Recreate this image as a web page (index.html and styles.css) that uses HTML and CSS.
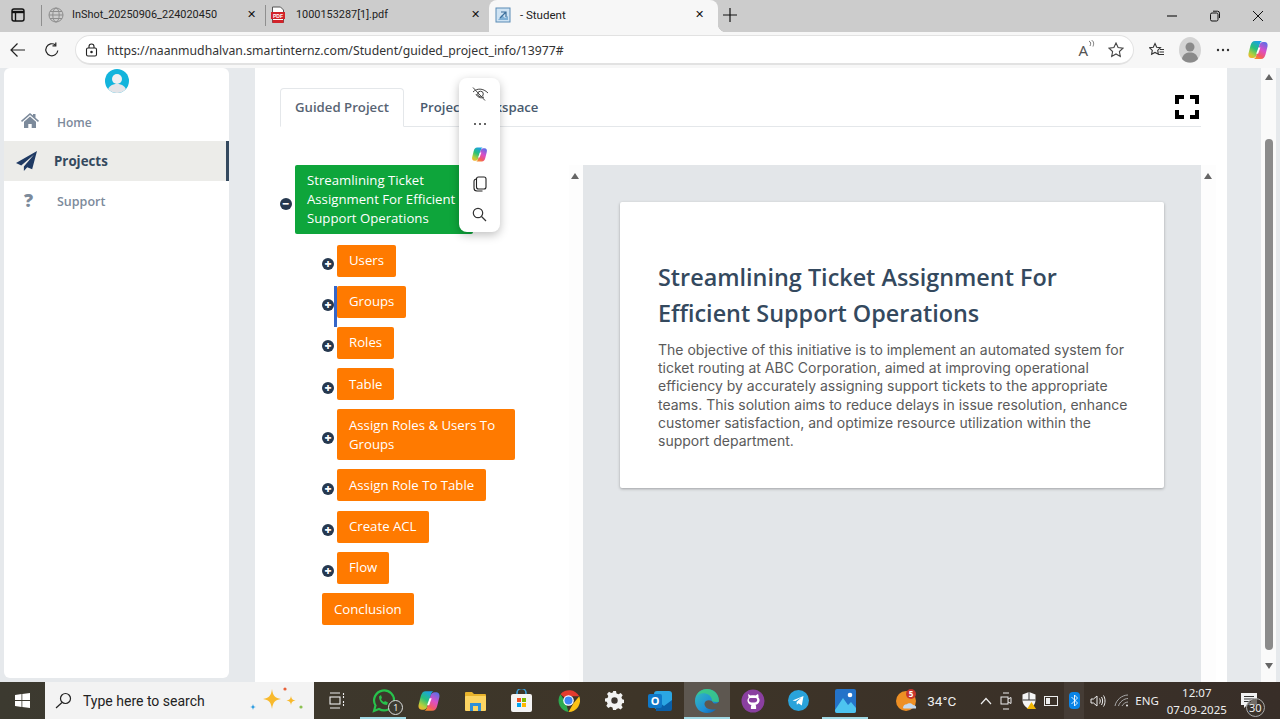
FILE: index.html
```html
<!DOCTYPE html>
<html lang="en">
<head>
  <meta charset="UTF-8">
  <title>Student</title>
  <link rel="stylesheet" href="styles.css">
</head>
<body>
  <div class="tabstrip">
    <div class="tab-menu">
      <svg width="16" height="16" viewBox="0 0 16 16" fill="none" stroke="#111" stroke-width="1.4"><rect x="2" y="2" width="12" height="12" rx="2"/><path d="M2 5h12" stroke-width="2.4"/><path d="M5.5 5v9"/></svg>
    </div>
    <div class="tab tab-first">
      <svg width="16" height="16" viewBox="0 0 16 16" fill="none" stroke="#8d8d8d"><circle cx="8" cy="8" r="7"/><ellipse cx="8" cy="8" rx="3.2" ry="7"/><path d="M1 8h14M2 4.5h12M2 11.500h12"/></svg>
      <span class="tab-title">InShot_20250906_224020450</span>
      <span class="tab-x">✕</span>
    </div>
    <div class="tab tab-second">
      <svg width="16" height="18" viewBox="0 0 16 18"><path d="M2.500 1h8l3 3v12.500h-11z" fill="#fff" stroke="#555"/><rect x="1" y="6" width="14" height="7" fill="#d2232a"/><text x="8" y="11.500" text-anchor="middle" class="pdf-label">PDF</text><path d="M2.500 14h11v3h-11z" fill="#d2232a"/></svg>
      <span class="tab-title">1000153287[1].pdf</span>
      <span class="tab-x">✕</span>
    </div>
    <div class="tab tab-active">
      <svg width="16" height="16" viewBox="0 0 16 16"><rect x="1" y="1" width="14" height="14" fill="#cfe3f3" stroke="#5b8bb5"/><path d="M3 13l4-5 3 3 3-2v4z" fill="#7fb0d6"/><path d="M6 5h5v5M11 5l-6 6" fill="none" stroke="#3c6f9c" stroke-width="1.2"/></svg>
      <span class="tab-title">- Student</span>
      <span class="tab-x">✕</span>
    </div>
    <div class="tab-new">
      <svg width="14" height="14" viewBox="0 0 14 14" stroke="#111" stroke-width="1.2"><path d="M7 0v14M0 7h14"/></svg>
    </div>
    <div class="win-controls">
      <svg width="12" height="12" viewBox="0 0 12 12" stroke="#111" stroke-width="1.1"><path d="M1 6h10"/></svg>
      <svg width="12" height="12" viewBox="0 0 12 12" fill="none" stroke="#111"><rect x="1.500" y="3" width="7.500" height="8" rx="1.500"/><path d="M4 1.200h4.500a2 2 0 0 1 2 2V8"/></svg>
      <svg width="12" height="12" viewBox="0 0 12 12" stroke="#111"><path d="M1 1l10 10M11 1L1 11"/></svg>
    </div>
  </div>

  <div class="toolbar">
    <svg class="nav-btn" width="16" height="16" viewBox="0 0 16 16" fill="none" stroke="#222" stroke-width="1.2"><path d="M15 8H1M7.500 1.500L1 8l6.500 6.500"/></svg>
    <svg class="nav-btn" width="16" height="16" viewBox="0 0 16 16" fill="none" stroke="#222" stroke-width="1.2"><path d="M13.800 8.500A6 6 0 1 1 11.500 3"/><path d="M11.800 .5v3.300H8.500"/></svg>
    <div class="addressbar">
      <svg width="13" height="14" viewBox="0 0 13 14" fill="none" stroke="#222" stroke-width="1.1"><rect x="1.500" y="5" width="10" height="8" rx="1.500"/><path d="M4 5V3.500a2.500 2.500 0 0 1 5 0V5"/><circle cx="6.500" cy="9" r=".7" fill="#222"/></svg>
      <span class="url">https://naanmudhalvan.smartinternz.com/Student/guided_project_info/13977#</span>
      <span class="read-aloud">A<svg width="7" height="9" viewBox="0 0 7 9" fill="none" stroke="#555" stroke-width=".8"><path d="M1 1c2 1 2 3 1 5M3.500 0c2.500 1.500 2.500 4 1.500 6.500"/></svg></span>
      <svg width="16" height="16" viewBox="0 0 16 16" fill="none" stroke="#444" stroke-width="1.1"><path d="M8 1l2.100 4.500 4.900.6-3.600 3.400.9 4.900L8 12l-4.300 2.400.9-4.900L1 6.100l4.900-.6z"/></svg>
    </div>
    <div class="toolbar-right">
      <svg width="16" height="16" viewBox="0 0 16 16" fill="none" stroke="#333" stroke-width="1.1"><path d="M6 1.500l1.700 3.700 3.800.5-2.800 2.700.7 3.900L6 10.400l-3.400 1.900.7-3.900L.5 5.700l3.800-.5z"/><path d="M11 7.500h4M10.500 10h4.500M9.500 12.500H15"/></svg>
      <svg class="profile" width="22" height="26" viewBox="0 0 22 26"><ellipse cx="11" cy="13" rx="11" ry="13" fill="#d4d4d4"/><circle cx="11" cy="10" r="4.500" fill="#8a8a8a"/><path d="M3 22c1-5 4-6.500 8-6.500s7 1.500 8 6.500c-2 2.500-5 3.500-8 3.500S5 24.500 3 22z" fill="#8a8a8a"/></svg>
      <svg class="more-dots" width="14" height="4" viewBox="0 0 14 4" fill="#333"><circle cx="2" cy="2" r="1.200"/><circle cx="7" cy="2" r="1.200"/><circle cx="12" cy="2" r="1.200"/></svg>
      <svg width="22" height="22" viewBox="0 0 22 22"><defs><linearGradient id="cp1" x1="0.700" y1="0" x2="0.200" y2="1"><stop offset="0" stop-color="#1a9fe8"/><stop offset=".45" stop-color="#27c07a"/><stop offset=".8" stop-color="#b5cf3c"/><stop offset="1" stop-color="#f5b32e"/></linearGradient><linearGradient id="cp2" x1="0.800" y1="0" x2="0.300" y2="1"><stop offset="0" stop-color="#5a6fe8"/><stop offset=".45" stop-color="#d94fc8"/><stop offset=".8" stop-color="#f2586a"/><stop offset="1" stop-color="#f58a2e"/></linearGradient></defs><path d="M8 2h7c-1 .5-1.700 1.500-2 2.500L9.500 16c-.5 1.800-1.800 3-3.500 3H4.500C2 19 1 17 1.500 14.500l2-8C4.200 3.800 5.500 2 8 2z" fill="url(#cp1)"/><path d="M14 20H7c1-.5 1.700-1.500 2-2.500L12.500 6c.5-1.800 1.800-3 3.500-3h1.500c2.500 0 3.500 2 3 4.500l-2 8c-.7 2.700-2 4.500-4.500 4.500z" fill="url(#cp2)"/><path d="M11.500 8.500l-2.300 6.300h1.900l2.300-6.300z" fill="#fff"/></svg>
    </div>
  </div>

  <div class="page">
    <aside class="sidebar">
      <div class="avatar">
        <svg width="24" height="24" viewBox="0 0 24 24"><defs><clipPath id="av"><circle cx="12" cy="12" r="12"/></clipPath></defs><g clip-path="url(#av)"><rect width="24" height="24" fill="#13b4dc"/><circle cx="12" cy="10" r="5" fill="#f0f0f2"/><path d="M2 24c1-7 5-9 10-9s9 2 10 9z" fill="#e4e4e8"/></g></svg>
      </div>
      <a class="nav-item nav-home">
        <svg class="nav-icon" width="18" height="15" viewBox="0 0 18 15" fill="#7c8a9b"><path d="M9 0l3 2.600V1h2.500v3.800L18 7.800l-1 1.100L9 2 1 8.900 0 7.800z"/><path d="M9 3.500l6 5.200V15h-4.300v-4H7.300v4H3V8.700z"/></svg>
        <span>Home</span>
      </a>
      <a class="nav-item nav-active">
        <svg class="nav-icon" width="21" height="20" viewBox="0 0 20 19" fill="#1f3a63"><path d="M20 0L0 11.500l5 2.200L17 3.500 7.500 14.700V19l3.200-3.600 4.700 2z"/></svg>
        <span>Projects</span>
      </a>
      <a class="nav-item nav-support">
        <span class="nav-icon help-mark">?</span>
        <span>Support</span>
      </a>
    </aside>

    <main class="content">
      <div class="tabs">
        <div class="tab-link tab-link-active">Guided Project</div>
        <div class="tab-link">Project Workspace</div>
        <svg class="fullscreen" width="24" height="24" viewBox="0 0 24 24" fill="none" stroke="#000" stroke-width="4"><path d="M2 9V2h7M15 2h7v7M22 15v7h-7M9 22H2v-7"/></svg>
      </div>

      <div class="workspace">
        <div class="tree">
          <div class="tree-root">
            <span class="toggle">−</span>
            <div class="node node-green">Streamlining Ticket Assignment For Efficient Support Operations</div>
          </div>
          <div class="tree-children">
            <div class="tree-row"><span class="toggle">+</span><div class="node">Users</div></div>
            <div class="tree-row tree-row-marked"><span class="toggle">+</span><div class="node">Groups</div></div>
            <div class="tree-row"><span class="toggle">+</span><div class="node">Roles</div></div>
            <div class="tree-row"><span class="toggle">+</span><div class="node">Table</div></div>
            <div class="tree-row"><span class="toggle">+</span><div class="node node-wide">Assign Roles &amp; Users To Groups</div></div>
            <div class="tree-row"><span class="toggle">+</span><div class="node">Assign Role To Table</div></div>
            <div class="tree-row"><span class="toggle">+</span><div class="node">Create ACL</div></div>
            <div class="tree-row"><span class="toggle">+</span><div class="node">Flow</div></div>
            <div class="tree-row"><div class="node">Conclusion</div></div>
          </div>
        </div>
        <div class="tree-scroll"><span class="arrow-up"></span></div>
        <div class="detail">
          <div class="card">
            <h1>Streamlining Ticket Assignment For Efficient Support Operations</h1>
            <p>The objective of this initiative is to implement an automated system for ticket routing at ABC Corporation, aimed at improving operational efficiency by accurately assigning support tickets to the appropriate teams. This solution aims to reduce delays in issue resolution, enhance customer satisfaction, and optimize resource utilization within the support department.</p>
          </div>
        </div>
        <div class="detail-scroll"><span class="arrow-up"></span></div>
      </div>
    </main>

    <div class="page-gutter"></div>
    <div class="page-scroll">
      <span class="arrow-up"></span>
      <div class="page-thumb"></div>
      <span class="arrow-down"></span>
    </div>
  </div>

  <div class="selection-menu">
    <svg width="18" height="16" viewBox="0 0 18 16" fill="none" stroke="#444" stroke-width="1"><path d="M2 6c4-4 10-4 15 1"/><path d="M5 8c1 3 5 5 8 3"/><circle cx="9.500" cy="8" r="2.800"/><path d="M2 1.500l12 13"/></svg>
    <svg width="14" height="4" viewBox="0 0 14 4" fill="#333"><circle cx="2" cy="2" r="1"/><circle cx="7" cy="2" r="1"/><circle cx="12" cy="2" r="1"/></svg>
    <svg width="17" height="17" viewBox="0 0 22 22"><path d="M8 2h7c-1 .5-1.700 1.500-2 2.500L9.500 16c-.5 1.800-1.800 3-3.500 3H4.500C2 19 1 17 1.500 14.500l2-8C4.200 3.800 5.500 2 8 2z" fill="url(#cp1)"/><path d="M14 20H7c1-.5 1.700-1.500 2-2.500L12.500 6c.5-1.800 1.800-3 3.500-3h1.500c2.500 0 3.500 2 3 4.500l-2 8c-.7 2.700-2 4.500-4.500 4.500z" fill="url(#cp2)"/><path d="M11.500 8.500l-2.300 6.300h1.900l2.300-6.300z" fill="#fff"/></svg>
    <svg width="14" height="16" viewBox="0 0 14 16" fill="none" stroke="#222" stroke-width="1.1"><rect x="3.500" y="1" width="9.500" height="12" rx="2"/><path d="M3.500 3A2.500 2.500 0 0 0 1 5.500V12a3 3 0 0 0 3 3h5.500"/></svg>
    <svg width="15" height="15" viewBox="0 0 15 15" fill="none" stroke="#333" stroke-width="1.2"><circle cx="6" cy="6" r="4.700"/><path d="M9.500 9.500L14 14"/></svg>
  </div>

  <footer class="taskbar">
    <div class="start">
      <svg width="15" height="15" viewBox="0 0 15 15" fill="#fff"><path d="M0 2.100l6.500-1V7H0zM7.300 1L15 0v7H7.300zM0 8h6.500v5.900l-6.500-1zM7.300 8H15v7l-7.700-1.100z"/></svg>
    </div>
    <div class="search">
      <svg width="17" height="17" viewBox="0 0 17 17" fill="none" stroke="#222" stroke-width="1.2"><circle cx="10.500" cy="6.500" r="5"/><path d="M7 10.500L1 16"/></svg>
      <span class="search-text">Type here to search</span>
      <svg class="search-art" width="58" height="30" viewBox="0 0 58 30"><path d="M24 3c1 7 3 9 9 10-6 1-8 3-9 10-1-7-3-9-9-10 6-1 8-3 9-10z" fill="#f8b92c"/><path d="M43 10c.5 3 1.500 4 4.500 4.500-3 .5-4 1.500-4.500 4.500-.5-3-1.500-4-4.500-4.500 3-.5 4-1.500 4.500-4.500z" fill="#f8b92c"/><path d="M5 18c.3 2 1 2.700 3 3-2 .3-2.700 1-3 3-.3-2-1-2.700-3-3 2-.3 2.700-1 3-3z" fill="#2a9be0"/><circle cx="37" cy="3" r="1.600" fill="#e9623a"/><circle cx="53" cy="21" r="1.600" fill="#8cc152"/></svg>
    </div>
    <div class="task-icons">
      <div class="task-icon">
        <svg width="16" height="17" viewBox="0 0 16 17" fill="none" stroke="#eee" stroke-width="1.1"><path d="M1 1h10M1 16h10"/><rect x="1" y="5" width="10" height="7"/><path d="M14.500 1v5M14.500 9v6" stroke-dasharray="2 1"/></svg>
      </div>
      <div class="task-icon task-running">
        <svg width="24" height="24" viewBox="0 0 24 24" fill="none" stroke="#27c24c" stroke-width="2.200"><path d="M3 22l1.500-5.500A10 10 0 1 1 8 20z"/><path d="M8 7.500c0 5 4 8.500 8 8.500l1-2.500-3-1.500-1 1c-1.500-.5-2.500-1.700-3-3l1-1-1-3z" fill="#27c24c" stroke="none"/></svg>
        <span class="task-badge">1</span>
      </div>
      <div class="task-icon">
        <svg width="24" height="24" viewBox="0 0 22 22"><path d="M8 2h7c-1 .5-1.700 1.500-2 2.500L9.500 16c-.5 1.800-1.800 3-3.500 3H4.500C2 19 1 17 1.500 14.500l2-8C4.200 3.800 5.500 2 8 2z" fill="url(#cp1)"/><path d="M14 20H7c1-.5 1.700-1.500 2-2.500L12.500 6c.5-1.800 1.800-3 3.500-3h1.500c2.500 0 3.500 2 3 4.500l-2 8c-.7 2.700-2 4.500-4.500 4.500z" fill="url(#cp2)"/><path d="M11.500 8.500l-2.300 6.300h1.900l2.300-6.300z" fill="#fff"/></svg>
      </div>
      <div class="task-icon">
        <svg width="21" height="20" viewBox="0 0 21 20"><path d="M0 2a1 1 0 0 1 1-1h6l2 2h11a1 1 0 0 1 1 1v3H0z" fill="#e8b32c"/><rect y="5" width="21" height="15" rx="1" fill="#fcd462"/><rect x="5" y="12" width="11" height="8" fill="#2f8fd8"/><rect x="8" y="15" width="5" height="5" fill="#fcd462"/></svg>
      </div>
      <div class="task-icon">
        <svg width="21" height="23" viewBox="0 0 21 23"><path d="M6 6V4a4.500 4.500 0 0 1 9 0v2" fill="none" stroke="#3aa0dc" stroke-width="1.600"/><rect y="5" width="21" height="18" rx="2" fill="#f4f4f4"/><rect x="6" y="9" width="4" height="4" fill="#f25022"/><rect x="11" y="9" width="4" height="4" fill="#7fba00"/><rect x="6" y="14" width="4" height="4" fill="#00a4ef"/><rect x="11" y="14" width="4" height="4" fill="#ffb900"/></svg>
      </div>
      <div class="task-icon">
        <svg width="23" height="23" viewBox="0 0 24 24"><path d="M12 12L3.600 5.500A12 12 0 0 1 23.200 7.500H12z" fill="#e33b2e"/><path d="M12 24A12 12 0 0 1 3.600 5.500L9 14z" fill="#2da94f"/><path d="M23.200 7.500A12 12 0 0 1 12 24l5-9z" fill="#fbc116"/><circle cx="12" cy="12" r="5.500" fill="#fff"/><circle cx="12" cy="12" r="4.200" fill="#3f86f4"/></svg>
      </div>
      <div class="task-icon">
        <svg width="19" height="19" viewBox="0 0 19 19"><path d="M8 0h3l.5 2.500 2 .8L15.700 2l2 2.200-1.300 2 .8 2.100 2.500.5v3l-2.500.4-.8 2.100 1.300 2-2 2.200-2.200-1.300-2 .8L11 19H8l-.5-2.500-2-.8L3.300 17l-2-2.200 1.300-2-.8-2.100L0 10.500v-3l2.500-.4.800-2.100-1.300-2 2-2.200 2.200 1.300 2-.8z" fill="#f2f2f2"/><circle cx="9.500" cy="9.500" r="3.200" fill="#3d3630"/></svg>
      </div>
      <div class="task-icon">
        <svg width="24" height="22" viewBox="0 0 24 22"><rect x="6" y="1" width="18" height="18" rx="3" fill="#2ba6e3"/><path d="M8 10l8 6 8-6v9a2 2 0 0 1-2 2H8z" fill="#0a5fa8"/><rect y="4" width="14" height="14" rx="2" fill="#0f78c8"/><text x="7" y="15" text-anchor="middle" class="outlook-o">O</text></svg>
      </div>
      <div class="task-icon task-current">
        <svg width="24" height="24" viewBox="0 0 24 24"><defs><linearGradient id="edge" x1="0" y1="0" x2="1" y2="1"><stop offset="0" stop-color="#35c1b6"/><stop offset=".6" stop-color="#1f8fd8"/><stop offset="1" stop-color="#0c5aa6"/></linearGradient></defs><path d="M12 0C5 0 0 5 0 12c0 7 5 12 12 12 4 0 7-1.500 9-4-3 1-9 1-11-3-1-2-.5-4 1-5 2-1.500 6-1 7 1.500 1 2 5 1 6-1C24 5 19 0 12 0z" fill="url(#edge)"/><path d="M24 12C24 5 19 0 12 0 7 0 3 3 1.500 7 4 4 10 3 14 6c2 1.500 3 3.500 3 6 2 1 7 2 7 0z" fill="#3fd07a" opacity=".75"/></svg>
      </div>
      <div class="task-icon">
        <svg width="24" height="24" viewBox="0 0 24 24"><circle cx="12" cy="12" r="11.500" fill="#8a3fa0"/><path d="M7 5l2.500 1.500c1.500-.4 3.500-.4 5 0L17 5c.6 1.300.7 2.500.4 3.500 1 1 1.300 2.300 1.100 3.500-.4 2.500-2.500 3.500-4 3.700.5.600.6 1.300.6 2v2.300H9.900V18c0-.7.1-1.400.6-2-1.500-.2-3.600-1.200-4-3.700-.2-1.200.1-2.500 1.100-3.500C7.300 7.500 7.400 6.300 7 5z" fill="#fff"/><path d="M9.500 9h5c1.500 0 2 1.500 1.500 3-.5 1-2 1.500-4 1.500S8.500 13 8 12c-.5-1.500 0-3 1.500-3z" fill="#8a3fa0"/></svg>
      </div>
      <div class="task-icon">
        <svg width="21" height="21" viewBox="0 0 21 21"><circle cx="10.500" cy="10.500" r="10.500" fill="#2aa3db"/><path d="M4.500 10.500l11-4.500-1.700 9.500-3.300-2.300-1.600 1.600-.4-2.900 4.800-4.400-6 3.600z" fill="#fff"/></svg>
      </div>
      <div class="task-icon task-running">
        <svg width="21" height="24" viewBox="0 0 21 24"><rect width="21" height="24" rx="2" fill="#2473c9"/><path d="M0 21l8-12 5 7 3-3 5 6v3a2 2 0 0 1-2 2H2a2 2 0 0 1-2-2z" fill="#4dc4f0"/><circle cx="15" cy="6" r="2.300" fill="#fff"/></svg>
      </div>
    </div>
    <div class="weather">
      <svg width="22" height="24" viewBox="0 0 22 24"><circle cx="10" cy="12" r="10" fill="#ee8f24"/><path d="M7 19c0-2.500 2-4 4-3.700 1-1.500 5-1.500 6 .7 2.500 0 3.500 1.500 3 3.500H8c-.7 0-1-.2-1-.5z" fill="#c5d9ee"/><circle cx="15" cy="5" r="5" fill="#c8352d"/><text x="15" y="8" text-anchor="middle" class="weather-count">5</text></svg>
      <span>34°C</span>
    </div>
    <div class="tray">
      <svg class="tray-chevron" width="12" height="8" viewBox="0 0 12 8" fill="none" stroke="#eee" stroke-width="1.200"><path d="M1 7l5-5.500L11 7"/></svg>
      <svg class="tray-meet" width="12" height="18" viewBox="0 0 12 18" fill="none" stroke="#eee"><path d="M3 1h6M3 17h6"/><rect x="1" y="5" width="7" height="7"/><path d="M8 7l3-1.500v6L8 10"/></svg>
      <svg class="tray-shield" width="14" height="17" viewBox="0 0 14 17"><path d="M7 0l6.500 2.500V8c0 4-3 7.500-6.500 9C3.500 15.500.5 12 .5 8V2.500z" fill="#f4f4f4"/><path d="M7 0v8H.5M7 8h6.500" stroke="#333" fill="none"/><path d="M9.500 10l4.500 7H5z" fill="#f2b705"/></svg>
      <svg class="tray-battery" width="15" height="10" viewBox="0 0 15 10" fill="none" stroke="#eee"><rect x=".5" y=".5" width="13" height="9"/><rect x="2" y="2" width="4" height="6" fill="#eee" stroke="none"/></svg>
      <div class="tray-bluetooth">
        <svg width="11" height="17" viewBox="0 0 11 17"><rect width="11" height="17" rx="4" fill="#0a84e8"/><path d="M2.500 5l6 6-3 3V3l3 3-6 6" fill="none" stroke="#fff" stroke-width=".9"/></svg>
      </div>
      <svg class="tray-volume" width="16" height="14" viewBox="0 0 16 14" fill="none" stroke="#eee"><path d="M1 5h2.500L7 2v10L3.500 9H1z"/><path d="M9.500 4.500c1 1.500 1 3.500 0 5M11.500 3c1.500 2.500 1.500 5.500 0 8M13.500 1.500c2 3 2 8 0 11"/></svg>
      <svg class="tray-wifi" width="15" height="13" viewBox="0 0 15 13" fill="none" stroke="#aaa"><path d="M14 1C8 1 2 6 1 12M14 4.500C10 4.500 5.500 8 4.500 12M14 8c-2.500 0-5 2-6 4"/><circle cx="13" cy="11.500" r="1" fill="#eee" stroke="none"/></svg>
      <span class="tray-lang">ENG</span>
      <div class="clock"><span>12:07</span><span>07-09-2025</span></div>
      <div class="notify">
        <svg width="16" height="16" viewBox="0 0 16 16"><path d="M0 0h16v12H6l-3 3v-3H0z" fill="#f2f2f2"/><path d="M3 3.500h10M3 6h10M3 8.500h7" stroke="#333"/></svg>
        <span class="notify-count">30</span>
      </div>
    </div>
  </footer>
</body>
</html>
```

FILE: styles.css
```css
* {
  box-sizing: border-box;
}

html, body {
  margin: 0;
  height: 719px;
  overflow: hidden;
}

body {
  display: flex;
  flex-direction: column;
  position: relative;
  font-family: "Open Sans", sans-serif;
  background: #e6e9ec;
}

svg {
  display: block;
  flex: none;
}

/* browser tabs */
.tabstrip {
  display: flex;
  align-items: center;
  height: 32px;
  background: #cccccc;
  font-family: Roboto, sans-serif;
  font-size: 10.900px;
  color: #222;
}
.tab-menu {
  display: flex;
  justify-content: center;
  width: 41px;
  padding-right: 5px;
  padding-bottom: 2px;
}
.tab {
  display: flex;
  align-items: center;
  gap: 8px;
  height: 32px;
  padding-left: 7px;
  padding-bottom: 3px;
  width: 224px;
}
.tab-first, .tab-second {
  position: relative;
}
.tab-first::before, .tab-second::before {
  content: "";
  position: absolute;
  left: 0;
  top: 5px;
  height: 21px;
  border-left: 1px solid #8f8f8f;
}
.tab-second {
  gap: 10px;
  padding-left: 5px;
}
.tab-title {
  flex: 1;
}
.tab-x {
  width: 28px;
  font-size: 11px;
  text-align: center;
  color: #111;
}
.tab-active {
  position: relative;
  width: 229px;
  padding-left: 6px;
  gap: 9px;
  background: #f7f7f7;
  border-radius: 8px 8px 0 0;
  font-size: 11.500px;
}
.tab-active .tab-x {
  margin-right: 5px;
}
.tab-active::after {
  content: "";
  position: absolute;
  left: 100%;
  bottom: 0;
  width: 8px;
  height: 8px;
  background: radial-gradient(circle at 100% 0, transparent 8px, #f7f7f7 8.500px);
}
.tab-new {
  margin-left: 5px;
  padding-bottom: 2px;
}
.win-controls {
  display: flex;
  gap: 31px;
  margin-left: auto;
  padding-right: 16px;
}

/* address row */
.toolbar {
  display: flex;
  align-items: center;
  height: 36px;
  padding-left: 10px;
  background: #f7f7f7;
}
.nav-btn {
  margin-right: 18px;
}
.toolbar .nav-btn:nth-child(2) {
  margin-right: 15px;
}
.addressbar {
  display: flex;
  align-items: center;
  width: 1059px;
  height: 30px;
  padding: 0 9px;
  background: #fff;
  border: 1px solid #e2e2e2;
  border-bottom-width: 2px;
  border-radius: 15px;
  gap: 9px;
}
.url {
  flex: 1;
  font-family: "Noto Sans", sans-serif;
  font-size: 12.250px;
  color: #333;
  padding-top: 1px;
}
.read-aloud {
  display: flex;
  align-items: flex-start;
  font-family: "Noto Sans", sans-serif;
  font-size: 15px;
  color: #555;
  margin-right: 4px;
}
.toolbar-right {
  display: flex;
  align-items: center;
  gap: 16px;
  padding-left: 15px;
}
.profile {
  margin-left: -2px;
}
.more-dots {
  margin-left: -1px;
  margin-right: 1px;
}

/* page */
.page {
  display: flex;
  flex: 1;
  min-height: 0;
  padding-left: 4px;
}
.sidebar {
  width: 225px;
  height: 610px;
  background: #fff;
  border-radius: 6px;
  font-size: 12.500px;
  color: #7c8a9b;
}
.avatar {
  display: flex;
  justify-content: center;
  height: 33px;
  padding-left: 1px;
  margin-top: 1px;
}
.nav-item {
  display: flex;
  align-items: center;
  height: 40px;
  padding-left: 16px;
  font-weight: 600;
}
.nav-icon {
  width: 20px;
  margin-right: 17px;
}
.nav-home {
  height: 39px;
  padding-top: 2px;
}
.nav-home .nav-icon {
  width: 18px;
  height: 15px;
  margin-left: 1px;
  margin-right: 17px;
  margin-top: -4px;
}
.nav-home span {
  font-size: 12px;
  margin-left: 1px;
}
.nav-active {
  padding-left: 12px;
  background: #ecece9;
  border-right: 3px solid #34495e;
  font-size: 13.300px;
  font-weight: 700;
  color: #34495e;
}
.nav-active .nav-icon {
  width: 21px;
  height: 20px;
  margin-right: 17px;
}
.help-mark {
  font-size: 18px;
  font-weight: 800;
  margin-left: 4px;
  margin-right: 13px;
  margin-top: -3px;
}

.content {
  width: 972px;
  margin-left: 26px;
  padding-left: 25px;
  background: #fff;
  overflow: hidden;
}
.tabs {
  display: flex;
  align-items: flex-end;
  position: relative;
  height: 59px;
  width: 921px;
  border-bottom: 1px solid #e4e7ea;
  font-size: 13.200px;
  font-weight: 600;
  color: #495a6e;
}
.tab-link {
  display: flex;
  align-items: center;
  height: 39px;
  padding: 0 16px 2px;
  margin-bottom: -1px;
}
.tab-link-active {
  padding: 0 14px 2px;
  background: #fff;
  border: 1px solid #e4e7ea;
  border-bottom-color: #fff;
  border-radius: 4px 4px 0 0;
  color: #586473;
}
.fullscreen {
  position: absolute;
  right: 2px;
  top: 27px;
}

.workspace {
  display: flex;
  margin-top: 38px;
  height: 517px;
}
.tree {
  width: 289px;
  font-size: 13.200px;
  line-height: 19px;
  color: #fff;
}
.tree-root {
  display: flex;
  align-items: center;
}
.toggle {
  display: flex;
  align-items: center;
  justify-content: center;
  width: 12px;
  height: 12px;
  border-radius: 50%;
  background: #26384f;
  font-size: 12px;
  font-weight: 800;
  line-height: 1;
  color: #fff;
  flex: none;
}
.tree-root .toggle {
  margin-top: 8px;
  margin-right: 3px;
}
.node {
  padding: 6.500px 12px;
  background: #ff7a00;
  border-radius: 2px;
}
.node-green {
  width: 178px;
  padding-top: 6px;
  padding-bottom: 6px;
  background: #0ea53b;
}
.node-wide {
  width: 178px;
}
.tree-children {
  padding-top: 10.500px;
  padding-left: 42px;
}
.tree-row {
  display: flex;
  align-items: center;
  margin-bottom: 9.200px;
  position: relative;
}
.tree-row .toggle {
  margin-top: 7px;
  margin-right: 3px;
}
.tree-row-marked::before {
  content: "";
  position: absolute;
  left: 12px;
  top: 0;
  width: 3px;
  height: 41px;
  background: #3566c8;
}
.tree-scroll, .detail-scroll {
  display: flex;
  justify-content: center;
  flex: none;
  padding-top: 8px;
  background: #fdfdfd;
}
.tree-scroll {
  width: 14px;
  padding-right: 2px;
}
.detail-scroll {
  width: 15px;
  padding-right: 2px;
}
.arrow-up, .arrow-down {
  display: block;
  width: 0;
  height: 0;
  border-left: 4.500px solid transparent;
  border-right: 4.500px solid transparent;
}
.arrow-up {
  border-bottom: 6px solid #666;
}
.arrow-down {
  border-top: 6px solid #666;
}
.detail {
  width: 618px;
  padding: 37px 37px 0;
  background: #e3e6e9;
}
.card {
  height: 286px;
  padding: 57px 30px 0 38px;
  background: #fff;
  border-radius: 2px;
  box-shadow: 0 1px 3px rgba(0,0,0,0.3);
}
.card h1 {
  margin: 0 0 10px;
  font-size: 23.400px;
  font-weight: 600;
  line-height: 36px;
  color: #34495e;
}
.card p {
  margin: 0;
  font-family: Inter, sans-serif;
  font-size: 14px;
  line-height: 18.200px;
  color: #5a5a5a;
}

.page-gutter {
  width: 34px;
}
.page-scroll {
  display: flex;
  flex-direction: column;
  align-items: center;
  width: 15px;
  padding: 6px 0 12px;
  background: #fafafa;
}
.page-thumb {
  width: 8px;
  height: 511px;
  margin: 59px 0 13px;
  background: #8b8b8b;
  border-radius: 4px;
}

/* popup over the selected text */
.selection-menu {
  position: absolute;
  left: 459px;
  top: 78px;
  width: 41px;
  height: 154px;
  display: grid;
  grid-auto-rows: 30px;
  justify-items: center;
  align-items: center;
  padding-top: 1px;
  background: #fff;
  border-radius: 8px;
  box-shadow: 0 3px 10px rgba(0,0,0,0.25);
}

/* windows taskbar */
.taskbar {
  display: flex;
  align-items: center;
  height: 37px;
  background: linear-gradient(90deg, #3c3a30, #3e3528 50%, #382e28);
  font-family: "Noto Sans", sans-serif;
  color: #eee;
}
.start {
  display: flex;
  justify-content: center;
  width: 45px;
}
.search {
  display: flex;
  align-items: center;
  width: 269px;
  height: 37px;
  padding-left: 10px;
  background: #f3f3f3;
  font-family: Roboto, sans-serif;
  font-size: 14px;
  color: #222;
}
.search-text {
  margin-left: 11px;
  flex: 1;
}
.search-art {
  margin-right: 8px;
}
.task-icons {
  display: flex;
}
.task-icon {
  display: flex;
  align-items: center;
  justify-content: center;
  position: relative;
  width: 46.200px;
  height: 37px;
}
.task-running {
  box-shadow: inset 0 -2px 0 #9fd8e4;
}
.task-current {
  background: #5d5750;
  box-shadow: inset 0 -2px 0 #9fd8e4;
}
.task-badge {
  position: absolute;
  right: 3px;
  bottom: 4px;
  width: 15px;
  height: 15px;
  border: 1px solid #ddd;
  border-radius: 50%;
  background: #3c3a30;
  font-size: 9px;
  line-height: 13px;
  text-align: center;
}
.outlook-o {
  font-family: "Noto Sans", sans-serif;
  font-size: 11px;
  font-weight: 700;
  fill: #fff;
}
.pdf-label {
  font-family: "Liberation Sans", sans-serif;
  font-size: 5px;
  font-weight: 700;
  fill: #fff;
}
.weather {
  display: flex;
  align-items: center;
  gap: 9px;
  margin-left: 28px;
  font-family: Roboto, sans-serif;
  font-size: 13.500px;
}
.weather-count {
  font-family: "Noto Sans", sans-serif;
  font-size: 8px;
  font-weight: 700;
  fill: #fff;
}
.tray {
  display: flex;
  align-items: center;
  margin-left: 24px;
  font-size: 11.500px;
}
.tray-meet {
  margin-left: 8px;
}
.tray-shield {
  margin-left: 10px;
}
.tray-battery {
  margin-left: 8px;
}
.tray-bluetooth {
  display: flex;
  align-items: center;
  justify-content: center;
  width: 20px;
  height: 37px;
  margin-left: 5px;
  background: #453c35;
}
.tray-volume {
  margin-left: 6px;
}
.tray-wifi {
  margin-left: 8px;
}
.tray-lang {
  margin-left: 6px;
}
.clock {
  display: flex;
  flex-direction: column;
  align-items: center;
  width: 66px;
  margin-left: 5px;
  line-height: 17px;
}
.notify {
  position: relative;
  margin-left: 11px;
}
.notify-count {
  position: absolute;
  left: 5px;
  top: 5px;
  width: 19px;
  height: 19px;
  border: 1px solid #aaa;
  border-radius: 50%;
  background: rgba(60,52,44,0.7);
  font-size: 11px;
  line-height: 17px;
  text-align: center;
}
```
